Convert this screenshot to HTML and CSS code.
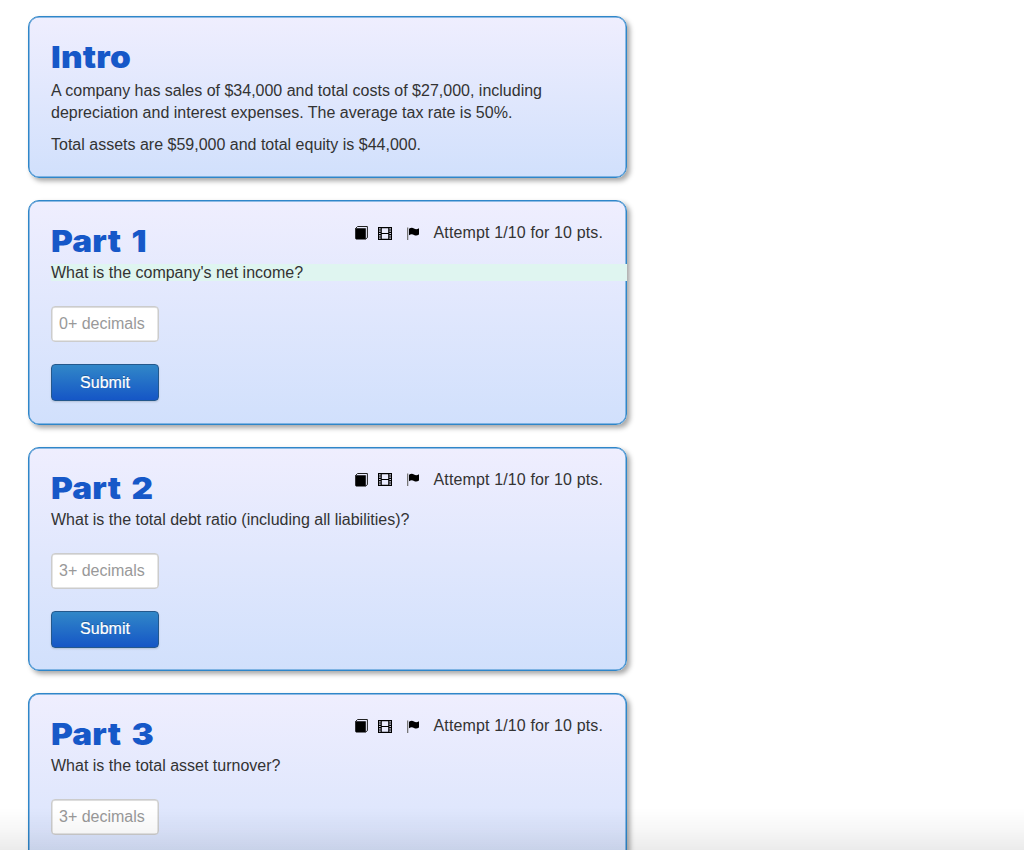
FILE: index.html
```html
<!DOCTYPE html>
<html lang="en">
<head>
    <meta charset="UTF-8">
    <title>Problem</title>
    <link rel="stylesheet" href="styles.css">
</head>
<body>
    <!-- Icons shared by all parts -->
    <svg class="sprite">
        <symbol id="book" viewBox="0 0 13 14">
            <path class="pages" d="M.5 2.500L2.600.5H12.400V11.700L10.600 13"/>
            <path d="M.2 2.300h10.600V13.500H1.200L.2 12.500z"/>
        </symbol>
        <symbol id="film" viewBox="0 0 14 13">
            <path fill-rule="evenodd" d="M0 0h14v13H0zM3.8 1.2v4.7h6.4V1.2zM3.8 7.1v4.7h6.4V7.1zM1.1 1.3v1.2h1.5V1.3zM1.1 3.6v1.2h1.5V3.6zM1.1 5.9v1.2h1.5V5.9zM1.1 8.2v1.2h1.5V8.2zM1.1 10.5v1.2h1.5v-1.2zM11.4 1.3v1.2h1.5V1.3zM11.4 3.6v1.2h1.5V3.6zM11.4 5.9v1.2h1.5V5.9zM11.4 8.2v1.2h1.5V8.2zM11.4 10.5v1.2h1.5v-1.2z"/>
        </symbol>
        <symbol id="flag" viewBox="0 0 12 13">
            <path class="pole" d="M0 .5h1.300V13H0z"/>
            <path d="M2 1.8C4 .4 5.6.6 7 1.5s3 1 5-.2V7.6c-2 1.2-3.6 1-5 .3S4 6.8 2 8.3z"/>
        </symbol>
    </svg>

    <div class="container">
        <div class="well intro">
            <h2>Intro</h2>
            <p>A company has sales of $34,000 and total costs of $27,000, including<br>depreciation and interest expenses. The average tax rate is 50%.</p>
            <p>Total assets are $59,000 and total equity is $44,000.</p>
        </div>

        <div class="well part">
            <div class="part-header">
                <h2>Part 1</h2>
                <div class="status">
                    <svg class="icon-book"><use href="#book"/></svg>
                    <svg class="icon-film"><use href="#film"/></svg>
                    <svg class="icon-flag"><use href="#flag"/></svg>
                    <span>Attempt 1/10 for 10 pts.</span>
                </div>
            </div>
            <p class="question highlight">What is the company's net income?</p>
            <input type="text" class="answer" placeholder="0+ decimals">
            <button class="btn">Submit</button>
        </div>

        <div class="well part">
            <div class="part-header">
                <h2>Part 2</h2>
                <div class="status">
                    <svg class="icon-book"><use href="#book"/></svg>
                    <svg class="icon-film"><use href="#film"/></svg>
                    <svg class="icon-flag"><use href="#flag"/></svg>
                    <span>Attempt 1/10 for 10 pts.</span>
                </div>
            </div>
            <p class="question">What is the total debt ratio (including all liabilities)?</p>
            <input type="text" class="answer" placeholder="3+ decimals">
            <button class="btn">Submit</button>
        </div>

        <div class="well part last">
            <div class="part-header">
                <h2>Part 3</h2>
                <div class="status">
                    <svg class="icon-book"><use href="#book"/></svg>
                    <svg class="icon-film"><use href="#film"/></svg>
                    <svg class="icon-flag"><use href="#flag"/></svg>
                    <span>Attempt 1/10 for 10 pts.</span>
                </div>
            </div>
            <p class="question">What is the total asset turnover?</p>
            <input type="text" class="answer" placeholder="3+ decimals">
        </div>
    </div>
    <div class="fade"></div>
</body>
</html>
```
FILE: styles.css
```css
* {
    box-sizing: border-box;
}
body {
    margin: 0;
    height: 850px;
    overflow: hidden;
    background: #fff;
    color: #333;
    font-family: "Liberation Sans", Arial, sans-serif;
    font-size: 16px;
    line-height: 22px;
}
.sprite {
    display: none;
}
.container {
    display: flex;
    flex-direction: column;
    gap: 22px;
    width: 599px;
    height: 850px;
    padding-top: 16.4px;
    margin-left: 28px;
}
.well {
    flex: none;
    padding: 21px 22px;
    border: 1px solid #2f86c9;
    border-radius: 11px;
    background: linear-gradient(#efeefe, #d1e0fc) no-repeat;
    box-shadow: 3px 3px 5px rgba(0, 0, 0, 0.35), inset 0 0 0 0.5px #2f86c9;
}
.intro {
    height: 162px;
}
.part {
    display: flex;
    flex-direction: column;
    align-items: flex-start;
    height: 224.4px;
}
/* runs on past the bottom of the window */
.last {
    flex: 1;
    height: auto;
    padding-bottom: 0;
    border-bottom: 0;
    border-radius: 11px 11px 0 0;
    background-size: 100% 223px;
}
h2 {
    margin: 0;
    font-family: Inter, "Arial Black", sans-serif;
    font-size: 30px;
    font-weight: 900;
    line-height: 38px;
    letter-spacing: 0.2px;
    word-spacing: 3px;
    color: #1658c8;
    transform: scaleX(1.11);
    transform-origin: left;
}
p {
    margin: 0 0 10px;
    white-space: nowrap;
}
.intro h2 {
    margin-bottom: 4px;
}
.part-header {
    display: flex;
    justify-content: space-between;
    width: 100%;
    height: 40px;
}
.status {
    display: flex;
    align-items: center;
    height: 22px;
    padding-right: 1px;
    letter-spacing: 0.13px;
}
.icon-book {
    width: 13px;
    height: 14px;
    margin-right: 10px;
}
.icon-film {
    width: 14px;
    height: 13px;
    margin-right: 15px;
}
.icon-flag {
    width: 12px;
    height: 13px;
    margin-right: 15px;
}
.pole {
    fill: #777;
}
.pages {
    fill: none;
    stroke: #222;
}
.question {
    height: 17px;
    margin: 2px 0 25px;
    line-height: 17px;
}
.highlight {
    align-self: stretch;
    margin-right: -23px;
    background: #dff5f0;
}
.answer {
    width: 108px;
    height: 36px;
    margin: 0 0 22px;
    padding: 0 7px;
    border: 1px solid #ccc;
    border-radius: 4px;
    background: #fff;
    box-shadow: inset 0 0 0 0.5px #ccc, inset 0 1px 1px rgba(0, 0, 0, 0.075);
    font: 16px "Liberation Sans", Arial, sans-serif;
}
.answer::placeholder {
    color: #999;
}
.btn {
    width: 108px;
    height: 37px;
    padding: 0;
    border: 1px solid #24588c;
    border-radius: 4px;
    background: linear-gradient(#3187c8, #1556c6);
    box-shadow: 0 1px 2px rgba(0, 0, 0, 0.15);
    color: #fff;
    font: 16px "Liberation Sans", Arial, sans-serif;
    -webkit-text-stroke: 0.2px #fff;
    text-shadow: 0 -1px 0 rgba(0, 0, 0, 0.25);
}
/* bottom edge shade */
.fade {
    position: fixed;
    left: 0;
    right: 0;
    bottom: 0;
    height: 42px;
    background: linear-gradient(rgba(0, 0, 0, 0), rgba(0, 0, 0, 0.03) 50%, rgba(0, 0, 0, 0.08));
    pointer-events: none;
}
```
